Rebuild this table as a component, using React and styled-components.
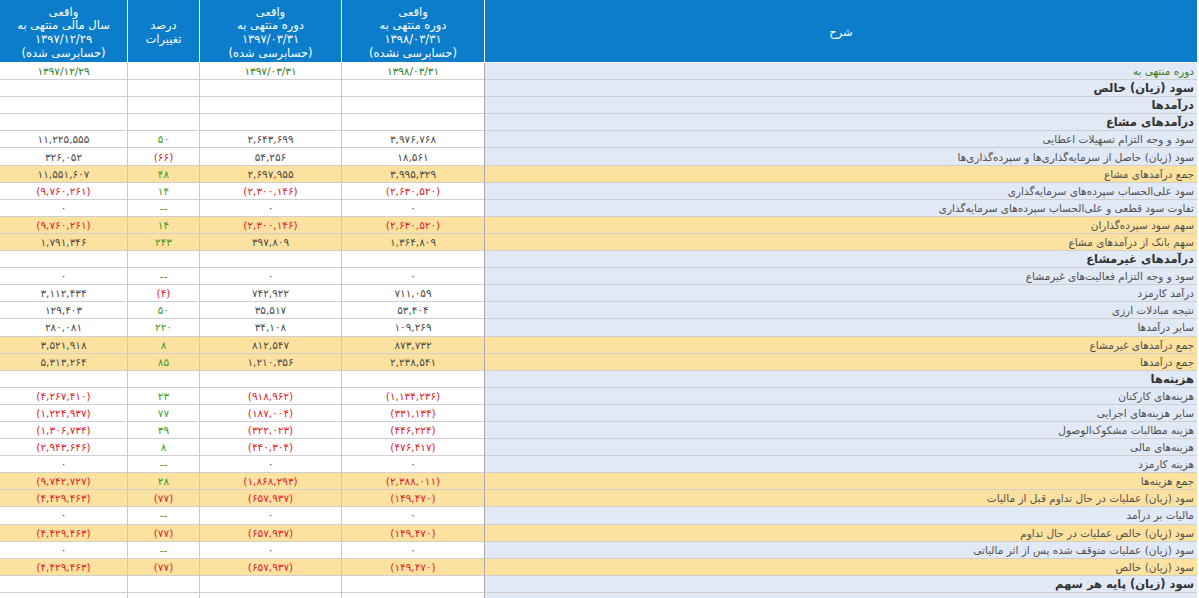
import React from "react";
import styled, { createGlobalStyle } from "styled-components";

const GlobalStyle = createGlobalStyle`
  body {
    margin: 0;
    background: #ffffff;
    font-family: "DejaVu Sans", "Noto Sans", sans-serif;
  }
`;

const COLS = "713px 143px 142px 72px 127px";

const Sheet = styled.div`
  width: 1197px;
  direction: rtl;
`;

const HeadRow = styled.div`
  display: grid;
  grid-template-columns: ${COLS};
  height: 63px;
  background: #0b7dca;
  border-bottom: 1px solid #ffffff;
  box-sizing: border-box;
`;

const HeadCell = styled.div`
  display: flex;
  align-items: center;
  justify-content: center;
  text-align: center;
  color: #ffffff;
  font-size: 11.5px;
  line-height: 13.6px;
  border-left: ${(p) => (p.$last ? "none" : "1px solid #ffffff")};
  white-space: pre-line;
  padding-top: 4px;
`;

const Row = styled.div`
  display: grid;
  grid-template-columns: ${COLS};
  height: 17.1px;
  background: ${(p) => (p.$hl ? "#fde29f" : "#ffffff")};
`;

const Desc = styled.div`
  background: ${(p) => (p.$hl ? "#fde29f" : "#e1e9f6")};
  border-bottom: 1px solid #cfcfcf;
  border-left: 1px solid #a8a8a8;
  box-sizing: border-box;
  padding-right: 3px;
  display: flex;
  align-items: center;
  white-space: nowrap;
  overflow: hidden;
  font-size: ${(p) => (p.$bold ? "11.5px" : "10.5px")};
  font-weight: ${(p) => (p.$bold ? 700 : 400)};
  color: ${(p) => (p.$date ? "#2f7d1f" : p.$bold ? "#333333" : "#505050")};
`;

const Num = styled.div`
  border-bottom: 1px solid #cfcfcf;
  border-left: ${(p) => (p.$last ? "none" : "1px solid #c9c9c9")};
  box-sizing: border-box;
  display: flex;
  align-items: center;
  justify-content: center;
  direction: ltr;
  font-size: 10.5px;
  color: ${(p) => p.$color};
`;

const FA = "۰۱۲۳۴۵۶۷۸۹";
const fa = (s) => s.replace(/[0-9]/g, (d) => FA[d]);

const headers = [
  "شرح",
  "واقعی\nدوره منتهی به\n1398/03/31\n(حسابرسی نشده)",
  "واقعی\nدوره منتهی به\n1397/03/31\n(حسابرسی شده)",
  "درصد\nتغییرات",
  "واقعی\nسال مالی منتهی به\n1397/12/29\n(حسابرسی شده)",
];

const Z = ["0", "0", "--", "0"];
const E = ["", "", "", ""];

const rows = [
  { label: "دوره منتهی به", t: "date", v: ["1398/03/31", "1397/03/31", "", "1397/12/29"] },
  { label: "سود (زیان) خالص", t: "bold", v: E },
  { label: "درآمدها", t: "bold", v: E },
  { label: "درآمدهای مشاع", t: "bold", v: E },
  { label: "سود و وجه التزام تسهیلات اعطایی", v: ["3,976,768", "2,643,699", "50", "11,225,555"] },
  { label: "سود (زیان) حاصل از سرمایه‌گذاری‌ها و سپرده‌گذاری‌ها", v: ["18,561", "54,256", "(66)", "326,052"] },
  { label: "جمع درآمدهای مشاع", t: "hl", v: ["3,995,329", "2,697,955", "48", "11,551,607"] },
  { label: "سود علی‌الحساب سپرده‌های سرمایه‌گذاری", v: ["(2,630,520)", "(2,300,146)", "14", "(9,760,261)"] },
  { label: "تفاوت سود قطعی و علی‌الحساب سپرده‌های سرمایه‌گذاری", v: Z },
  { label: "سهم سود سپرده‌گذاران", t: "hl", v: ["(2,630,520)", "(2,300,146)", "14", "(9,760,261)"] },
  { label: "سهم بانک از درآمدهای مشاع", t: "hl", v: ["1,364,809", "397,809", "243", "1,791,346"] },
  { label: "درآمدهای غیرمشاع", t: "bold", v: E },
  { label: "سود و وجه التزام فعالیت‌های غیرمشاع", v: Z },
  { label: "درآمد کارمزد", v: ["711,059", "742,922", "(4)", "3,112,434"] },
  { label: "نتیجه مبادلات ارزی", v: ["53,404", "35,517", "50", "129,403"] },
  { label: "سایر درآمدها", v: ["109,269", "34,108", "220", "280,081"] },
  { label: "جمع درآمدهای غیرمشاع", t: "hl", v: ["873,732", "812,547", "8", "3,521,918"] },
  { label: "جمع درآمدها", t: "hl", v: ["2,238,541", "1,210,356", "85", "5,313,264"] },
  { label: "هزینه‌ها", t: "bold", v: E },
  { label: "هزینه‌های کارکنان", v: ["(1,134,236)", "(918,962)", "23", "(4,267,410)"] },
  { label: "سایر هزینه‌های اجرایی", v: ["(331,134)", "(187,004)", "77", "(1,224,937)"] },
  { label: "هزینه مطالبات مشکوک‌الوصول", v: ["(446,224)", "(322,023)", "39", "(1,306,734)"] },
  { label: "هزینه‌های مالی", v: ["(476,417)", "(440,304)", "8", "(2,943,646)"] },
  { label: "هزینه کارمزد", v: Z },
  { label: "جمع هزینه‌ها", t: "hl", v: ["(2,388,011)", "(1,868,293)", "28", "(9,742,727)"] },
  { label: "سود (زیان) عملیات در حال تداوم قبل از مالیات", t: "hl", v: ["(149,470)", "(657,937)", "(77)", "(4,429,463)"] },
  { label: "مالیات بر درآمد", v: Z },
  { label: "سود (زیان) خالص عملیات در حال تداوم", t: "hl", v: ["(149,470)", "(657,937)", "(77)", "(4,429,463)"] },
  { label: "سود (زیان) عملیات متوقف شده پس از اثر مالیاتی", v: Z },
  { label: "سود (زیان) خالص", t: "hl", v: ["(149,470)", "(657,937)", "(77)", "(4,429,463)"] },
  { label: "سود (زیان) پایه هر سهم", t: "bold", v: E },
  { label: "", v: E },
];

const colorFor = (val, idx, type) => {
  if (type === "date") return "#2f7d1f";
  if (val.startsWith("(")) return "#e3202c";
  if (idx === 2) return "#3b9a26";
  return "#4a4a4a";
};

export default function App() {
  return (
    <Sheet>
      <GlobalStyle />
      <HeadRow>
        {headers.map((h, i) => (
          <HeadCell key={i} $last={i === headers.length - 1}>
            {fa(h)}
          </HeadCell>
        ))}
      </HeadRow>
      {rows.map((r, i) => (
        <Row key={i} $hl={r.t === "hl"}>
          <Desc $hl={r.t === "hl"} $bold={r.t === "bold"} $date={r.t === "date"}>
            {r.label}
          </Desc>
          {r.v.map((val, j) => (
            <Num key={j} $last={j === 3} $color={colorFor(val, j, r.t)}>
              {fa(val)}
            </Num>
          ))}
        </Row>
      ))}
    </Sheet>
  );
}
